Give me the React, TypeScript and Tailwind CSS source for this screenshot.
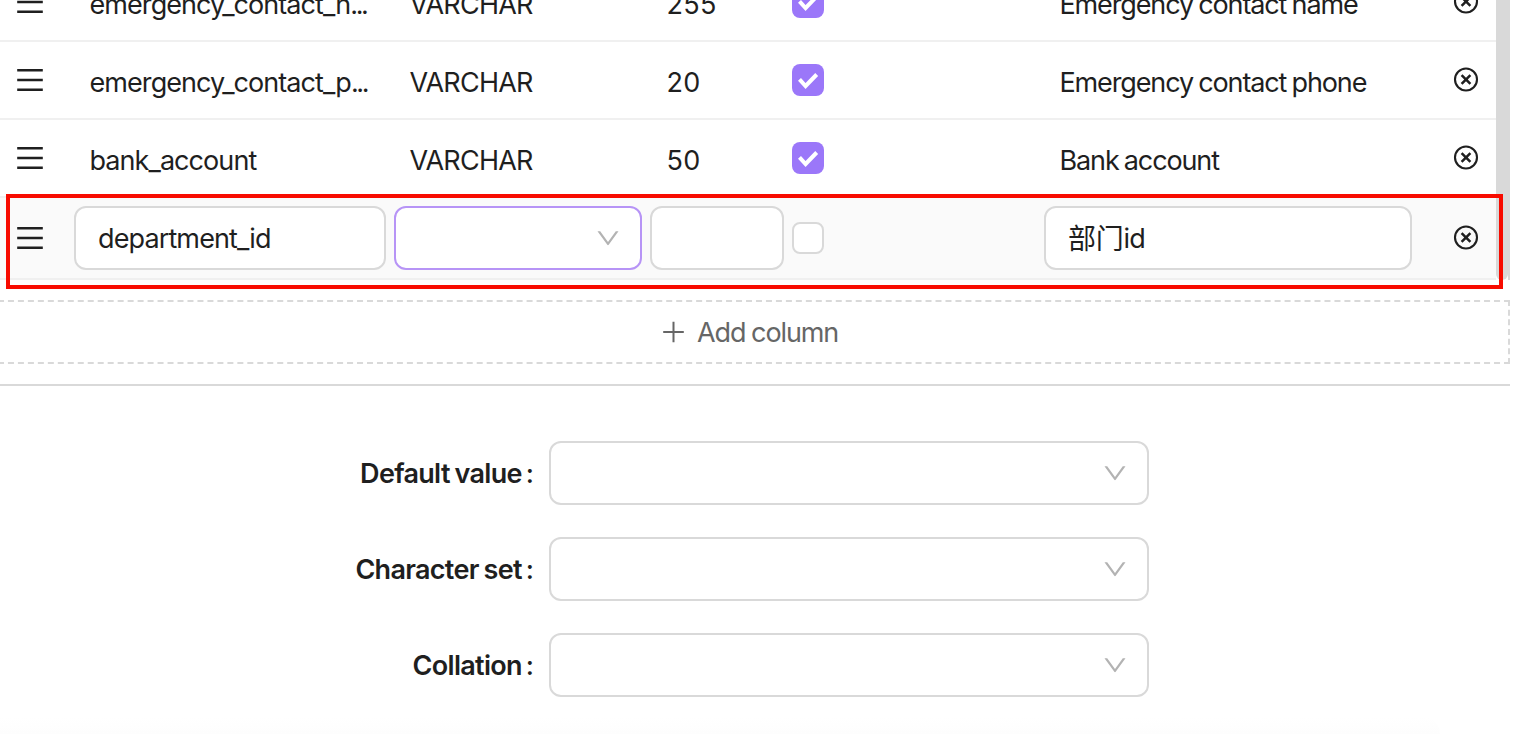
import React from "react";

const Menu = () => (
  <svg className="block h-6 w-7" viewBox="0 0 28 24" fill="none" stroke="#1f1f1f" strokeWidth="2.4">
    <path d="M1.2 2.2H26.8M1.2 12H26.8M1.2 21.8H26.8" />
  </svg>
);

const Remove = () => (
  <svg className="block h-6 w-6 overflow-visible" viewBox="0 0.5 24 24" fill="none" stroke="#1f1f1f" strokeWidth="2.1">
    <circle cx="12" cy="12" r="11" />
    <path d="M7.6 7.6L16.4 16.4M16.4 7.6L7.6 16.4" strokeWidth="2.5" />
  </svg>
);

const Down = () => (
  <svg className="block h-7 w-7" viewBox="0 -5 1024 1024" fill="#b3b3b3">
    <path d="M884 256h-75c-5.1 0-9.9 2.5-12.9 6.6L512 654.2 227.9 262.6c-3-4.1-7.8-6.6-12.9-6.6h-75c-6.5 0-10.3 7.4-6.5 12.7l352.6 486.1c12.8 17.6 39 17.6 51.7 0l352.6-486.1c3.9-5.3.1-12.7-6.4-12.7z" />
  </svg>
);

const Checked = () => (
  <span className="block h-8 w-8 rounded-lg bg-[#9b77f9]">
    <svg className="block h-8 w-8" viewBox="0 0 32 32" fill="none" stroke="#fff" strokeWidth="4">
      <path d="M7.5 15.3L13.6 22L24.7 10.5" />
    </svg>
  </span>
);

type Column = { name: string; cut?: boolean; size: string; comment: string };

const columns: Column[] = [
  { name: "emergency_contact_n", cut: true, size: "255", comment: "Emergency contact name" },
  { name: "emergency_contact_p", cut: true, size: "20", comment: "Emergency contact phone" },
  { name: "bank_account", size: "50", comment: "Bank account" },
];

const Row = ({ c }: { c: Column }) => (
  <div className="flex h-[78px] shrink-0 items-center border-b-2 border-[#f0f0f0] pl-4">
    <div className="w-[73.5px]"><Menu /></div>
    <div className="w-80 pt-[5px] tracking-[-0.93px]">{c.name}{c.cut && <span className="tracking-[-2.4px]">...</span>}</div>
    <div className="w-[257px] pt-[5px] tracking-[-0.77px]">VARCHAR</div>
    <div className="w-[125.5px] pt-[5px] tracking-[0.3px]">{c.size}</div>
    <div className="w-[267.5px]"><Checked /></div>
    <div className="w-[394.5px] pt-[5px] tracking-[-1.13px] [word-spacing:-1.2px]">{c.comment}</div>
    <Remove />
  </div>
);

const fields = ["Default value", "Character set", "Collation"];

export default function App() {
  return (
    <div className="relative flex h-[734px] w-[1514px] flex-col overflow-hidden bg-white font-['Inter','Noto_Sans_CJK_SC',sans-serif] text-[27px] leading-[44px] whitespace-nowrap text-[#1f1f1f]">
      <div className="flex h-[280px] w-[1510px] shrink-0">
        <div className="flex w-[1496px] flex-col justify-end">
          {columns.map((c) => <Row key={c.name} c={c} />)}
          <div className="flex h-[82px] shrink-0 items-center border-b-2 border-[#f0f0f0] bg-[#fafafa] pl-4">
            <div className="w-[58px]"><Menu /></div>
            <div className="mr-2 flex h-16 w-[312px] items-center rounded-xl border-2 border-[#d9d9d9] bg-white pt-0.5 pl-[22px] tracking-[-0.88px]">department_id</div>
            <div className="mr-2 flex h-16 w-[248px] items-center justify-end rounded-xl border-2 border-[#b794f6] bg-white pr-[18px]"><Down /></div>
            <div className="mr-2 h-16 w-[134px] rounded-xl border-2 border-[#d9d9d9] bg-white" />
            <div className="mr-[220px] h-8 w-8 rounded-lg border-2 border-[#d9d9d9] bg-white" />
            <div className="mr-[42px] flex h-16 w-[368px] items-center rounded-xl border-2 border-[#d9d9d9] bg-white pt-0.5 pl-[22px]">
              <span className="text-[28px] tracking-[-0.3px]">部门</span><span className="tracking-[-0.8px]">id</span>
            </div>
            <Remove />
          </div>
        </div>
        <div className="w-3.5 border-r-2 border-[#d9d9d9]">
          <div className="h-full w-3 rounded-b-md bg-[#d9d9d9]" />
        </div>
      </div>
      <div className="mt-5 -ml-3 flex h-16 w-[1522px] shrink-0 items-center border-2 border-dashed border-[#d9d9d9] pl-[672px] text-[#666]">
        <svg className="mr-3 block h-[23px] w-[23px]" viewBox="0 0 23 23" fill="none" stroke="#666" strokeWidth="2">
          <path d="M11.5 .7V21.3M1.2 11H21.8" />
        </svg>
        <span className="pt-0.5 tracking-[-1.1px] [word-spacing:-0.8px]">Add column</span>
      </div>
      <div className="mt-5 h-0.5 w-[1510px] shrink-0 bg-[#d9d9d9]" />
      <div className="mt-[55px] flex flex-col gap-8">
        {fields.map((label) => (
          <div key={label} className="flex h-16 items-center">
            <div className="mr-4 flex w-[533px] justify-end gap-1 pt-0.5 font-semibold">
              <span className="tracking-[-0.7px] [word-spacing:-1.2px]">{label}</span><span className="-mr-px font-medium">:</span>
            </div>
            <div className="flex h-16 w-[600px] items-center justify-end rounded-xl border-2 border-[#d9d9d9] bg-white pr-[18px]"><Down /></div>
          </div>
        ))}
      </div>
      <div className="mt-5 h-[17px] w-[1440px] shrink-0 rounded-tr-full bg-linear-to-b from-white to-[#fdfdfd]" />
      <div className="absolute top-[194px] left-[6px] h-[95px] w-[1497px] border-4 border-[#f80b00]" />
    </div>
  );
}
